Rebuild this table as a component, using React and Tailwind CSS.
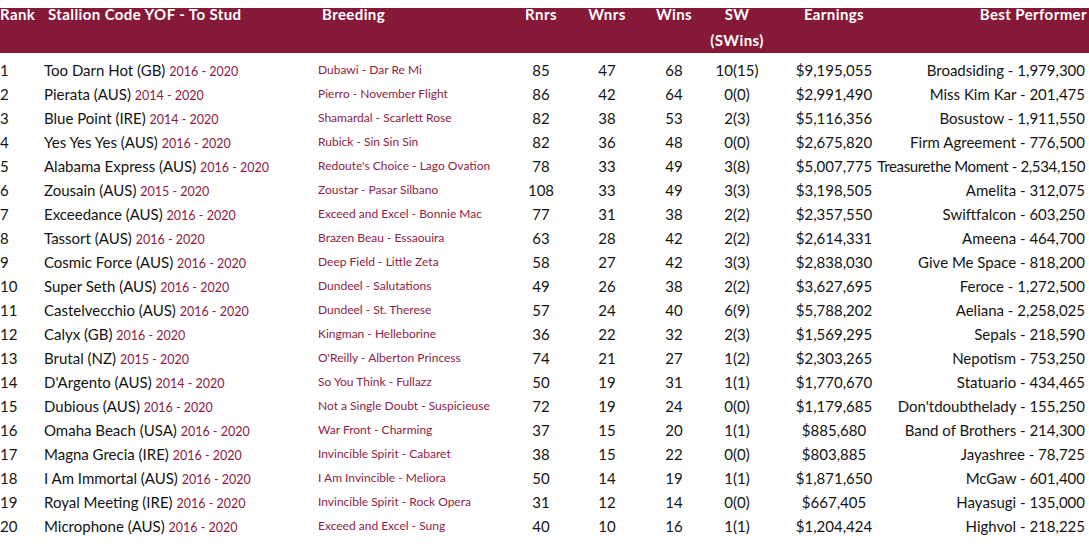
import React from 'react';

const rows = [
  ['1', 'Too Darn Hot (GB)', '2016 - 2020', 'Dubawi - Dar Re Mi', '85', '47', '68', '10(15)', '$9,195,055', 'Broadsiding - 1,979,300'],
  ['2', 'Pierata (AUS)', '2014 - 2020', 'Pierro - November Flight', '86', '42', '64', '0(0)', '$2,991,490', 'Miss Kim Kar - 201,475'],
  ['3', 'Blue Point (IRE)', '2014 - 2020', 'Shamardal - Scarlett Rose', '82', '38', '53', '2(3)', '$5,116,356', 'Bosustow - 1,911,550'],
  ['4', 'Yes Yes Yes (AUS)', '2016 - 2020', 'Rubick - Sin Sin Sin', '82', '36', '48', '0(0)', '$2,675,820', 'Firm Agreement - 776,500'],
  ['5', 'Alabama Express (AUS)', '2016 - 2020', "Redoute's Choice - Lago Ovation", '78', '33', '49', '3(8)', '$5,007,775', 'Treasurethe Moment - 2,534,150'],
  ['6', 'Zousain (AUS)', '2015 - 2020', 'Zoustar - Pasar Silbano', '108', '33', '49', '3(3)', '$3,198,505', 'Amelita - 312,075'],
  ['7', 'Exceedance (AUS)', '2016 - 2020', 'Exceed and Excel - Bonnie Mac', '77', '31', '38', '2(2)', '$2,357,550', 'Swiftfalcon - 603,250'],
  ['8', 'Tassort (AUS)', '2016 - 2020', 'Brazen Beau - Essaouira', '63', '28', '42', '2(2)', '$2,614,331', 'Ameena - 464,700'],
  ['9', 'Cosmic Force (AUS)', '2016 - 2020', 'Deep Field - Little Zeta', '58', '27', '42', '3(3)', '$2,838,030', 'Give Me Space - 818,200'],
  ['10', 'Super Seth (AUS)', '2016 - 2020', 'Dundeel - Salutations', '49', '26', '38', '2(2)', '$3,627,695', 'Feroce - 1,272,500'],
  ['11', 'Castelvecchio (AUS)', '2016 - 2020', 'Dundeel - St. Therese', '57', '24', '40', '6(9)', '$5,788,202', 'Aeliana - 2,258,025'],
  ['12', 'Calyx (GB)', '2016 - 2020', 'Kingman - Helleborine', '36', '22', '32', '2(3)', '$1,569,295', 'Sepals - 218,590'],
  ['13', 'Brutal (NZ)', '2015 - 2020', "O'Reilly - Alberton Princess", '74', '21', '27', '1(2)', '$2,303,265', 'Nepotism - 753,250'],
  ['14', "D'Argento (AUS)", '2014 - 2020', 'So You Think - Fullazz', '50', '19', '31', '1(1)', '$1,770,670', 'Statuario - 434,465'],
  ['15', 'Dubious (AUS)', '2016 - 2020', 'Not a Single Doubt - Suspicieuse', '72', '19', '24', '0(0)', '$1,179,685', "Don'tdoubthelady - 155,250"],
  ['16', 'Omaha Beach (USA)', '2016 - 2020', 'War Front - Charming', '37', '15', '20', '1(1)', '$885,680', 'Band of Brothers - 214,300'],
  ['17', 'Magna Grecia (IRE)', '2016 - 2020', 'Invincible Spirit - Cabaret', '38', '15', '22', '0(0)', '$803,885', 'Jayashree - 78,725'],
  ['18', 'I Am Immortal (AUS)', '2016 - 2020', 'I Am Invincible - Meliora', '50', '14', '19', '1(1)', '$1,871,650', 'McGaw - 601,400'],
  ['19', 'Royal Meeting (IRE)', '2016 - 2020', 'Invincible Spirit - Rock Opera', '31', '12', '14', '0(0)', '$667,405', 'Hayasugi - 135,000'],
  ['20', 'Microphone (AUS)', '2016 - 2020', 'Exceed and Excel - Sung', '40', '10', '16', '1(1)', '$1,204,424', 'Highvol - 218,225'],
];

function HeaderRow() {
  return (
    <div className="mt-[8px] h-[45px] bg-[#861838] text-white font-bold text-[15px] tracking-[0.4px] leading-[26px] flex items-start whitespace-nowrap">
      <div className="flex w-full -mt-[7px]">
        <div className="w-[44px] shrink-0">Rank</div>
        <div className="w-[274px] shrink-0 pl-[4px]">Stallion Code YOF - To Stud</div>
        <div className="w-[192px] shrink-0 pl-[4px]">Breeding</div>
        <div className="w-[62px] shrink-0 text-center">Rnrs</div>
        <div className="w-[70px] shrink-0 text-center">Wnrs</div>
        <div className="w-[64px] shrink-0 text-center">Wins</div>
        <div className="w-[62px] shrink-0 text-center">SW<br />(SWins)</div>
        <div className="w-[132px] shrink-0 text-center">Earnings</div>
        <div className="flex-1 min-w-0 flex justify-end pr-[2px]">Best Performer</div>
      </div>
    </div>
  );
}

function DataRow({ r }) {
  // the longest performer name runs right up to the earnings figure
  const tight = r[9].length > 27;
  return (
    <div className="flex h-[24px] items-center text-[15px] text-[#141414] whitespace-nowrap">
      <div className="w-[44px] shrink-0">{r[0]}</div>
      <div className="w-[274px] shrink-0">
        {r[1]} <span className="text-[12.5px] text-[#8b1c3f]">{r[2]}</span>
      </div>
      <div className="w-[192px] shrink-0 text-[12px] text-[#8e2346]">{r[3]}</div>
      <div className="w-[62px] shrink-0 text-center">{r[4]}</div>
      <div className="w-[70px] shrink-0 text-center">{r[5]}</div>
      <div className="w-[64px] shrink-0 text-center">{r[6]}</div>
      <div className="w-[62px] shrink-0 text-center">{r[7]}</div>
      <div className="w-[132px] shrink-0 text-center">{r[8]}</div>
      <div className={tight ? 'flex-1 min-w-0 flex justify-end pr-[4px] tracking-[-0.35px]' : 'flex-1 min-w-0 flex justify-end pr-[4px]'}>
        {r[9]}
      </div>
    </div>
  );
}

export default function App() {
  return (
    <div className="w-[1089px] h-[555px] bg-white overflow-hidden font-['Lato',sans-serif]">
      <HeaderRow />
      <div className="mt-[5px]">
        {rows.map((r) => (
          <DataRow key={r[0]} r={r} />
        ))}
      </div>
    </div>
  );
}
